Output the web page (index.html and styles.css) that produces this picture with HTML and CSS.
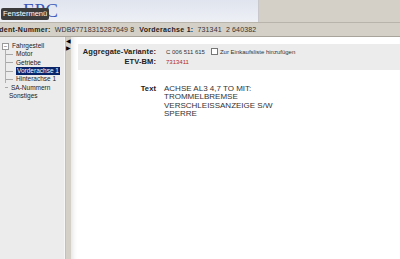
FILE: index.html
```html
<!DOCTYPE html>
<html>
<head>
<meta charset="utf-8">
<link rel="stylesheet" href="styles.css">
</head>
<body>
<div class="app">
  <div class="header">
    <div class="logo-area"><span class="logo">EPC</span></div>
    <div class="header-rest"></div>
    <div class="tooltip">Fenstermenü</div>
  </div>
  <div class="idrow">
    <span class="lbl first">Ident-Nummer:</span>
    <span class="val">WDB67718315287649 8</span>
    <span class="lbl">Vorderachse 1:</span>
    <span class="val">731341&nbsp; 2 640382</span>
  </div>
  <div class="body">
    <div class="tree">
      <div class="node root"><span class="box">−</span>Fahrgestell</div>
      <div class="node child"><span class="hline"></span>Motor</div>
      <div class="node child"><span class="hline"></span>Getriebe</div>
      <div class="node child"><span class="hline"></span><span class="sel">Vorderachse 1</span></div>
      <div class="node child"><span class="hline"></span>Hinterachse 1</div>
      <div class="node top"><span class="hline short"></span>SA-Nummern</div>
      <div class="node top">Sonstiges</div>
    </div>
    <div class="splitter">
      <span class="arr">◀</span>
      <span class="arr">▶</span>
    </div>
    <div class="main">
      <div class="infobox">
        <div class="row">
          <span class="k">Aggregate-Variante:</span>
          <span class="v">C 006 511 615</span>
          <span class="cb"></span>
          <span class="v">Zur Einkaufsliste hinzufügen</span>
        </div>
        <div class="row">
          <span class="k">ETV-BM:</span>
          <span class="v red">7313411</span>
        </div>
      </div>
      <div class="textrow">
        <span class="k">Text</span>
        <div class="txt">ACHSE AL3 4,7 TO MIT:<br>TROMMELBREMSE<br>VERSCHLEISSANZEIGE S/W<br>SPERRE</div>
      </div>
    </div>
  </div>
</div>
</body>
</html>
```
FILE: styles.css
```css
html, body { margin: 0; padding: 0; }
body { width: 400px; height: 259px; overflow: hidden; background: #fff; font-family: "Liberation Sans", Arial, sans-serif; }
.app { display: flex; flex-direction: column; height: 259px; }
.header { position: relative; display: flex; height: 22px; border-bottom: 1px solid #b8b4ac; }
.logo-area { width: 258px; background: linear-gradient(#dfe4ee, #eef0f5); border-right: 1px solid #c8c8cc; position: relative; overflow: hidden; }
.logo { position: absolute; left: 23px; top: 0; font-family: "Liberation Serif", serif; font-size: 19px; line-height: 22px; color: #3a55b8; }
.header-rest { flex: 1; background: #d4d0c8; }
.tooltip { position: absolute; left: 1px; top: 8px; height: 12px; padding: 0 2px; background: #3c3c3c; color: #fff; font-size: 7.5px; line-height: 12px; border-radius: 2px; }
.idrow { height: 13px; background: #d4d0c8; border-bottom: 1px solid #a8a49c; display: flex; align-items: center; gap: 4px; font-size: 7px; color: #222; white-space: nowrap; overflow: hidden; }
.idrow .lbl { font-weight: bold; letter-spacing: 0.3px; }
.idrow .first { margin-left: -3px; }
.idrow .val { letter-spacing: 0.15px; margin-right: 1px; color: #333; }
.body { flex: 1; display: flex; min-height: 0; }
.tree { width: 64px; background: #ececec; border-right: 1px solid #f6f6f6; padding-top: 5px; font-size: 6.5px; color: #222; }
.node { height: 8.3px; line-height: 8px; display: flex; align-items: center; white-space: nowrap; }
.root { padding-left: 2px; }
.box { display: inline-block; width: 5px; height: 5px; border: 1px solid #999; background: #fff; font-size: 6px; line-height: 4px; text-align: center; margin-right: 3px; color: #333; }
.child { border-left: 1px solid #b0b0b0; margin-left: 5px; }
.hline { display: inline-block; width: 7px; height: 1px; background: #a8a8a8; margin-right: 3px; }
.hline.short { width: 3px; }
.top { padding-left: 5px; }
.top:last-child { padding-left: 9px; }
.sel { background: #0a246a; color: #fff; padding: 0 1px; }
.splitter { width: 5px; background: #d4d0c8; border-left: 1px solid #c4c0b8; display: flex; flex-direction: column; align-items: center; padding-top: 1px; font-size: 6px; line-height: 7px; color: #000; }
.main { flex: 1; background: #fff; padding: 7px 0 0 7px; box-shadow: inset 6px 0 5px -4px #e4e4e4; }
.infobox { background: #ececec; height: 26px; padding-top: 2px; box-sizing: border-box; }
.row { display: flex; align-items: center; height: 9px; margin-top: 1px; white-space: nowrap; }
.k { width: 78px; flex: none; text-align: right; font-weight: bold; font-size: 7.5px; color: #222; letter-spacing: 0.1px; white-space: nowrap; }
.v { font-size: 6px; color: #333; margin-left: 10px; }
.red { color: #b02828; }
.cb { width: 5px; height: 5px; border: 1px solid #777; background: #fff; margin-left: 6px; margin-right: -8px; }
.textrow { display: flex; margin-top: 15px; }
.textrow .k { line-height: 8px; }
.txt { margin-left: 8px; font-size: 8px; line-height: 8.3px; color: #333; }
```
